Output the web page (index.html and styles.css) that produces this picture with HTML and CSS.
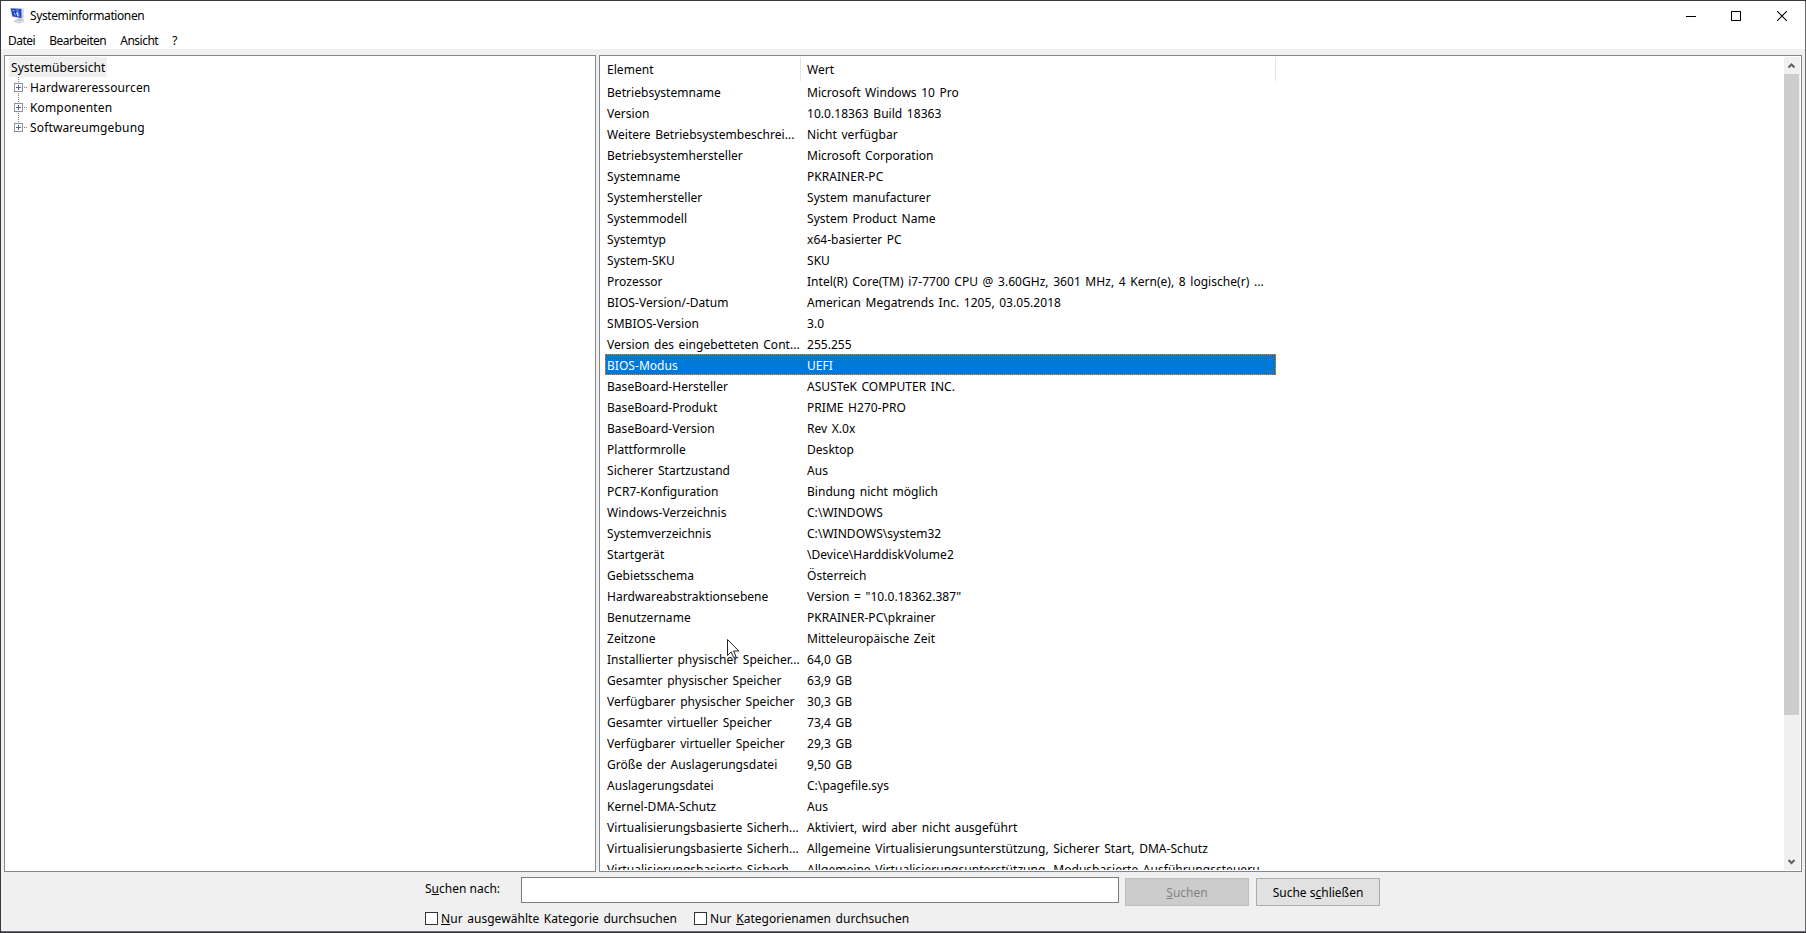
FILE: index.html
```
<!DOCTYPE html>
<html lang="de">
<head>
    <meta charset="UTF-8">
    <meta name="viewport" content="width=device-width, initial-scale=1.0">
    <title>Systeminformationen</title>
    <link rel="stylesheet" href="styles.css">
</head>
<body>
    <div class="window">
        <header class="title-bar">
            <svg class="app-icon" width="16" height="16" viewBox="0 0 16 16">
                <path d="M4 12.500l6-2.500 4 1.500v2L9.500 15.500l-5-1.500z" fill="#c3c6c9"/>
                <path d="M5.500 12.800l4.500 1.200 3.500-1.700" fill="none" stroke="#eceeef"/>
                <path d="M10.500 0l3.300.500v9.500l-2.500 1z" fill="#d5d8e0"/>
                <path d="M0 0l12 .300.3 10.700L2 9z" fill="#c5cde6"/>
                <path d="M.7.600l10.500.400.3 9L2.600 8.300z" fill="#1b3db8"/>
                <path d="M5.500.800l3.500.200 1.200 8.700-3.200-.6z" fill="#4a70d4"/>
                <path d="M2.500 2.500l2 .3M4 4.500l1.500 3M6 5l3 2.500M7.500 4v4" fill="none" stroke="#dfe8ff" stroke-width=".8"/>
            </svg>
            <span class="title">Systeminformationen</span>
            <div class="window-buttons">
                <svg class="minimize" width="10" height="10" viewBox="0 0 10 10" shape-rendering="crispEdges"><path d="M0 5.500h10" stroke="#000"/></svg>
                <svg width="10" height="10" viewBox="0 0 10 10" shape-rendering="crispEdges"><path d="M.5.500h9v9h-9z" fill="none" stroke="#000"/></svg>
                <svg width="10" height="10" viewBox="0 0 10 10"><path d="M0 0l10 10M10 0L0 10" stroke="#000" stroke-width="1.100"/></svg>
            </div>
        </header>

        <nav class="menu-bar">
            <span>Datei</span>
            <span>Bearbeiten</span>
            <span>Ansicht</span>
            <span>?</span>
        </nav>

        <main class="panes">
            <section class="tree">
                <div class="tree-root">Systemübersicht</div>
                <div class="tree-item"><i class="expander"></i><span>Hardwareressourcen</span></div>
                <div class="tree-item"><i class="expander"></i><span>Komponenten</span></div>
                <div class="tree-item"><i class="expander"></i><span>Softwareumgebung</span></div>
            </section>

            <section class="list">
                <div class="list-content">
                    <div class="list-header"><span>Element</span><span>Wert</span></div>
                    <div class="row"><span>Betriebsystemname</span><span>Microsoft Windows 10 Pro</span></div>
                    <div class="row"><span>Version</span><span>10.0.18363 Build 18363</span></div>
                    <div class="row"><span>Weitere Betriebsystembeschrei...</span><span>Nicht verfügbar</span></div>
                    <div class="row"><span>Betriebsystemhersteller</span><span>Microsoft Corporation</span></div>
                    <div class="row"><span>Systemname</span><span>PKRAINER-PC</span></div>
                    <div class="row"><span>Systemhersteller</span><span>System manufacturer</span></div>
                    <div class="row"><span>Systemmodell</span><span>System Product Name</span></div>
                    <div class="row"><span>Systemtyp</span><span>x64-basierter PC</span></div>
                    <div class="row"><span>System-SKU</span><span>SKU</span></div>
                    <div class="row"><span>Prozessor</span><span>Intel(R) Core(TM) i7-7700 CPU @ 3.60GHz, 3601 MHz, 4 Kern(e), 8 logische(r) ...</span></div>
                    <div class="row"><span>BIOS-Version/-Datum</span><span>American Megatrends Inc. 1205, 03.05.2018</span></div>
                    <div class="row"><span>SMBIOS-Version</span><span>3.0</span></div>
                    <div class="row"><span>Version des eingebetteten Cont...</span><span>255.255</span></div>
                    <div class="row selected"><span>BIOS-Modus</span><span>UEFI</span></div>
                    <div class="row"><span>BaseBoard-Hersteller</span><span>ASUSTeK COMPUTER INC.</span></div>
                    <div class="row"><span>BaseBoard-Produkt</span><span>PRIME H270-PRO</span></div>
                    <div class="row"><span>BaseBoard-Version</span><span>Rev X.0x</span></div>
                    <div class="row"><span>Plattformrolle</span><span>Desktop</span></div>
                    <div class="row"><span>Sicherer Startzustand</span><span>Aus</span></div>
                    <div class="row"><span>PCR7-Konfiguration</span><span>Bindung nicht möglich</span></div>
                    <div class="row"><span>Windows-Verzeichnis</span><span>C:\WINDOWS</span></div>
                    <div class="row"><span>Systemverzeichnis</span><span>C:\WINDOWS\system32</span></div>
                    <div class="row"><span>Startgerät</span><span>\Device\HarddiskVolume2</span></div>
                    <div class="row"><span>Gebietsschema</span><span>Österreich</span></div>
                    <div class="row"><span>Hardwareabstraktionsebene</span><span>Version = "10.0.18362.387"</span></div>
                    <div class="row"><span>Benutzername</span><span>PKRAINER-PC\pkrainer</span></div>
                    <div class="row"><span>Zeitzone</span><span>Mitteleuropäische Zeit</span></div>
                    <div class="row"><span>Installierter physischer Speicher...</span><span>64,0 GB</span></div>
                    <div class="row"><span>Gesamter physischer Speicher</span><span>63,9 GB</span></div>
                    <div class="row"><span>Verfügbarer physischer Speicher</span><span>30,3 GB</span></div>
                    <div class="row"><span>Gesamter virtueller Speicher</span><span>73,4 GB</span></div>
                    <div class="row"><span>Verfügbarer virtueller Speicher</span><span>29,3 GB</span></div>
                    <div class="row"><span>Größe der Auslagerungsdatei</span><span>9,50 GB</span></div>
                    <div class="row"><span>Auslagerungsdatei</span><span>C:\pagefile.sys</span></div>
                    <div class="row"><span>Kernel-DMA-Schutz</span><span>Aus</span></div>
                    <div class="row"><span>Virtualisierungsbasierte Sicherh...</span><span>Aktiviert, wird aber nicht ausgeführt</span></div>
                    <div class="row"><span>Virtualisierungsbasierte Sicherh...</span><span>Allgemeine Virtualisierungsunterstützung, Sicherer Start, DMA-Schutz</span></div>
                    <div class="row"><span>Virtualisierungsbasierte Sicherh...</span><span>Allgemeine Virtualisierungsunterstützung, Modusbasierte Ausführungssteueru</span></div>
                </div>
                <div class="scrollbar">
                    <svg class="arrow" width="16" height="17" viewBox="0 0 16 17"><path d="M4.500 10.500L7.500 7.500l3 3" fill="none" stroke="#606060" stroke-width="2"/></svg>
                    <div class="thumb"></div>
                    <svg class="arrow" width="16" height="17" viewBox="0 0 16 17"><path d="M4.500 7l3 3 3-3" fill="none" stroke="#606060" stroke-width="2"/></svg>
                </div>
            </section>
        </main>

        <footer class="search">
            <div class="search-row">
                <label class="search-label"><span>S<u>u</u>chen nach:</span></label>
                <input class="search-input" type="text">
                <button class="button" disabled><span><u>S</u>uchen</span></button>
                <button class="button"><span>Suche s<u>c</u>hließen</span></button>
            </div>
            <div class="option-row">
                <label class="option"><i class="checkbox"></i><span><u>N</u>ur ausgewählte Kategorie durchsuchen</span></label>
                <label class="option"><i class="checkbox"></i><span>Nur <u>K</u>ategorienamen durchsuchen</span></label>
            </div>
        </footer>
    </div>

    <svg class="cursor" width="13" height="20" viewBox="0 0 13 20"><path d="M.5.500v16l3.700-3.600 2.500 5.700 2.400-1-2.500-5.600h5.200z" fill="#fff" stroke="#222"/></svg>
</body>
</html>
```
FILE: styles.css
```
* {
    margin: 0;
    padding: 0;
    box-sizing: border-box;
}

body {
    height: 933px;
    overflow: hidden;
    background: #3a383c;
    color: #000;
    font: 12px/20px "Noto Sans", sans-serif;
}

.window {
    display: flex;
    flex-direction: column;
    width: 1804px;
    height: 930px;
    margin: 1px;
    background: #f0f0f0;
    box-shadow: 1px 1px 0 #6c6a6e;
}

.title-bar {
    display: flex;
    align-items: center;
    height: 29px;
    padding-left: 9px;
    background: #fff;
}

.app-icon {
    margin-right: 4px;
}

.title {
    letter-spacing: -0.4px;
}

.window-buttons {
    display: flex;
    gap: 36px;
    margin-left: auto;
    padding-right: 18px;
}

.minimize {
    margin-right: -1px;
}

.menu-bar {
    display: flex;
    gap: 14px;
    height: 19px;
    padding-left: 7px;
    background: #fff;
    line-height: 22px;
    letter-spacing: -0.5px;
}

.panes {
    display: flex;
    gap: 3px;
    height: 817px;
    margin: 6px 3px 0;
}

.tree,
.list {
    border: 1px solid #828790;
    background: #fff;
}

.tree {
    width: 592px;
    padding: 1px 4px;
    line-height: 22px;
}

.tree-root {
    width: 98px;
    height: 20px;
    padding-left: 2px;
    background: #f0f0f0;
    letter-spacing: 0.05px;
}

/* dotted connector lines: one down through the boxes, one towards the label */
.tree-item {
    display: flex;
    align-items: center;
    height: 20px;
    padding-left: 5px;
    background:
        repeating-linear-gradient(#808080 0 1px, #fff 1px 2px) 9px 0 / 1px 20px no-repeat,
        repeating-linear-gradient(90deg, #808080 0 1px, #fff 1px 2px) 15px 10px / 4px 1px no-repeat;
    letter-spacing: 0.15px;
}

.tree-item:last-child {
    background-size: 1px 10px, 4px 1px;
}

.tree-item span {
    padding-top: 1px;
}

.expander {
    width: 9px;
    height: 9px;
    margin-right: 7px;
    border: 1px solid #919191;
    background:
        linear-gradient(#4b63a7, #4b63a7) center / 5px 1px no-repeat,
        linear-gradient(#4b63a7, #4b63a7) center / 1px 5px no-repeat,
        #fff;
}

.list {
    display: flex;
    flex: 1;
    padding: 1px;
}

.list-content {
    flex: 1;
    height: 813px;
    padding-left: 4px;
    overflow: hidden;
    letter-spacing: 0.04px;
    word-spacing: 1.4px;
}

.list-header,
.row {
    display: grid;
    grid-template-columns: 200px 471px;
    width: 671px;
    height: 21px;
    white-space: pre;
    line-height: 23px;
}

.row span,
.list-header span {
    padding-left: 2px;
}

.list-header {
    grid-template-columns: 196px 475px;
    height: 24px;
    line-height: 26px;
}

.list-header span {
    height: 24px;
    border-right: 1px solid #e5e5e5;
}

.list-header span:last-child {
    padding-left: 6px;
}

.selected {
    outline: 1px dotted #e8872b;
    outline-offset: -1px;
    background: #0078d7;
    color: #fff;
}

.scrollbar {
    width: 16px;
    background: #f0f0f0;
}

.arrow {
    display: block;
}

.thumb {
    width: 15px;
    height: 641px;
    margin-bottom: 138px;
    background: #cdcdcd;
}

.search-row {
    display: flex;
    height: 34px;
    padding: 5px 0 0 424px;
}

.search-label {
    width: 96px;
    line-height: 24px;
}

.search-input {
    width: 598px;
    height: 26px;
    margin-right: 6px;
    border: 1px solid #7a7a7a;
}

.button {
    width: 124px;
    height: 28px;
    margin: 1px 7px 0 0;
    padding-top: 2px;
    border: 1px solid #adadad;
    background: #e1e1e1;
    color: #000;
    font: inherit;
}

.button:disabled {
    border-color: #bfbfbf;
    background: #ccc;
    color: #838383;
}

.option-row {
    display: flex;
    height: 24px;
    padding-left: 424px;
    letter-spacing: 0.04px;
    word-spacing: 1.4px;
}

.option {
    display: flex;
    align-items: center;
    width: 269px;
}

.option span {
    padding-top: 2px;
}

.checkbox {
    width: 13px;
    height: 13px;
    margin-right: 3px;
    border: 1px solid #333;
    background: #fff;
}

.cursor {
    position: absolute;
    top: 639px;
    left: 727px;
}
```
